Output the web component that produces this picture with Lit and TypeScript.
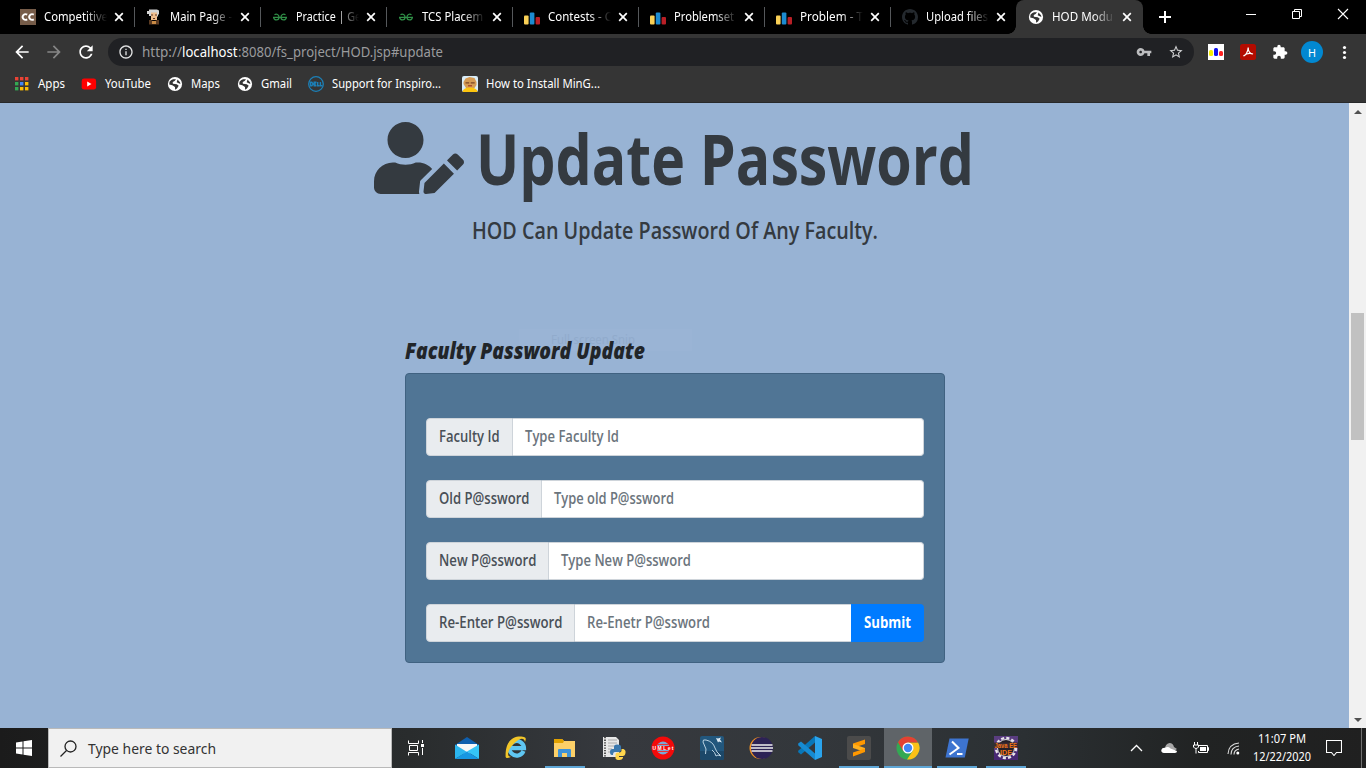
import { LitElement, html, svg, css, nothing, TemplateResult, SVGTemplateResult } from "lit";
import { customElement } from "lit/decorators.js";

// One line of text set to a fixed measure, capitals centred in its box.
const line = (text: string, width: number, size: number, cls = "ui", height = Math.round(size * 1.5)) => html`
  <svg class="line ${cls}" width=${width} height=${height}>
    <text x="0" y=${height / 2 + size * 0.355} font-size=${size} textLength=${width} lengthAdjust="spacingAndGlyphs" xml:space="preserve">${text}</text>
  </svg>`;

const icon = (body: SVGTemplateResult, w = 16, h = w, box = `0 0 ${w} ${h}`) =>
  html`<svg class="icon" width=${w} height=${h} viewBox=${box}>${body}</svg>`;
const material = (d: string, size: number, color: string) =>
  icon(svg`<path fill=${color} d=${d} />`, size, size, "0 0 24 24");

const globe = icon(svg`<circle cx="8" cy="8" r="7.1" fill="#fff"/>
  <path d="M2.5 5.8 4 4.2 6 3.3 9 3.2 7.6 5 5.7 6 5.9 7.7 9.8 8.3 11.7 9.7 10 12.5 8.1 13.8 8 11 5.3 9.3 2.2 8.5z" fill="#353535"/>
  <path d="M10.5 3.4 13 6.2 13.4 8 11.2 7 9.7 6.3z" fill="#353535"/>`);

const bars = icon(svg`<rect x="0" y="6.500" width="4.6" height="9" rx="1" fill="#f9d056"/>
  <rect x="5.8" y="3.500" width="4.6" height="12" rx="1" fill="#1c8bd0"/>
  <rect x="11.6" y="8" width="4.4" height="7.500" rx="1" fill="#b91f26"/>`);

const geeks = icon(svg`<g fill="none" stroke="#2f8d46" stroke-width="1.3">
  <path d="M1 8.4H15M2.500 5.700C4.500 4.400 7 5.500 7 8.300 7 11.600 2.200 12 1.600 8.400M13.500 5.700C11.500 4.400 9 5.500 9 8.300 9 11.600 13.800 12 14.400 8.400"/></g>`);

const codechef = icon(svg`<rect width="16" height="16" fill="#765c49"/>
  <path d="M7.2 5.6A3 2.8 0 1 0 7.2 10.4M13.8 5.6A3 2.8 0 1 0 13.8 10.4" fill="none" stroke="#fff" stroke-width="1.9"/>`);

const wizard = icon(svg`<path d="M3 .500h8l2 1v4h-1v2h-1V4H5v3H3V5H1V2h2z" fill="#d4d4d4"/><path d="M5 3.500h6V11H5z" fill="#efbd8c"/>
  <path d="M5 5.500h2v1H5zM9 5.500h2v1H9zM7 9h2v1H7z" fill="#5b3522"/><path d="M3 11h2l3 1.500 3-1.500h2v4.500H3z" fill="#5d3c22"/><path d="M6 12h4v3H6z" fill="#c98b45"/>`);

const github = icon(svg`<path fill="#24292e" d="M8 0C3.58 0 0 3.58 0 8c0 3.54 2.29 6.53 5.47 7.59.4.07.55-.17.55-.38 0-.19-.01-.82-.01-1.49-2.01.37-2.53-.49-2.69-.94-.09-.23-.48-.94-.82-1.13-.28-.15-.68-.52-.01-.53.63-.01 1.08.58 1.23.82.72 1.21 1.87.87 2.33.66.07-.52.28-.87.51-1.07-1.78-.2-3.64-.89-3.64-3.95 0-.87.31-1.59.82-2.15-.08-.2-.36-1.02.08-2.12 0 0 .67-.21 2.2.82.64-.18 1.32-.27 2-.27s1.36.09 2 .27c1.53-1.04 2.2-.82 2.2-.82.44 1.1.16 1.92.08 2.12.51.56.82 1.27.82 2.15 0 3.07-1.87 3.75-3.65 3.95.29.25.54.73.54 1.48 0 1.07-.01 1.93-.01 2.2 0 .21.15.46.55.38A8.01 8.01 0 0016 8c0-4.42-3.58-8-8-8z"/>`);

const cross = icon(svg`<path d="M1.2 1.2 8.8 8.8M8.8 1.2 1.2 8.8" stroke="#fff" stroke-width="1.7"/>`, 10);

const tabs: [TemplateResult, string, number][] = [
  [codechef, "Competitive", 64],
  [wizard, "Main Page -", 62],
  [geeks, "Practice | Ge", 65],
  [geeks, "TCS Placem", 61],
  [bars, "Contests - C", 64],
  [bars, "Problemset", 60],
  [bars, "Problem - T", 63],
  [github, "Upload files", 62],
  [globe, "HOD Modu", 61],
];

const apps = icon(svg`${["#ea4335", "#ea4335", "#ea4335", "#34a853", "#4285f4", "#fbbc04", "#34a853", "#fbbc04", "#fbbc04"].map(
  (c, i) => svg`<rect x=${1 + (i % 3) * 5} y=${1 + Math.floor(i / 3) * 5} width="3.4" height="3.4" fill=${c}/>`)}`);
const youtube = icon(svg`<rect x=".7" y="2.6" width="14.4" height="11" rx="2.4" fill="#f00"/><path d="M6.2 5.6v5l4.3-2.5z" fill="#fff"/>`);
const dell = icon(svg`<circle cx="8" cy="8" r="7.3" fill="none" stroke="#1c80b8" stroke-width="1.3"/>
  <path d="M2.6 6.2v3.6h1.2l1.3-1.8-1.3-1.8zM8.5 6.2H6.2v3.6h2.3M6.2 8h2M9.7 6v3.8h1.8M12.4 6v3.8h2" fill="none" stroke="#1c80b8" stroke-width="1.4"/>`);
const mascot = icon(svg`<rect width="16" height="16" rx="2" fill="#d9ecf8"/><path d="M1.500 8V6l2-3.500 4-1.500 5 1 2 4v3l-2 3H4z" fill="#d59b54"/>
  <path d="M3.5 6.2h3.7v1.3H3.500zM8.7 6.2h4v1.3h-4z" fill="#7a4526"/><path d="M6 9.2h4v1.2H6z" fill="#a23a25"/><path d="M.500 16q.500-4.500 7.500-4.500t7.500 4.500z" fill="#fcc40e"/>`);

const bookmarks: [TemplateResult, string, number, string][] = [
  [apps, "Apps", 27, ""],
  [youtube, "YouTube", 46, ""],
  [globe, "Maps", 29, "near"],
  [globe, "Gmail", 31, ""],
  [dell, "Support for Inspiro...", 109, "long"],
  [mascot, "How to Install MinG...", 114, ""],
];

// label, label width, label cell width, placeholder, placeholder width
const fields: [string, number, number, string, number][] = [
  ["Faculty Id", 60, 87, "Type Faculty Id", 94],
  ["Old P@ssword", 90, 116, "Type old P@ssword", 120],
  ["New P@ssword", 97, 123, "Type New P@ssword", 130],
  ["Re-Enter P@ssword", 123, 149, "Re-Enetr P@ssword", 123],
];

const mail = icon(svg`<path d="M0 9 12 1l12 8v5H0z" fill="#0f5fae"/><path d="M2 8h20v6l-10 5L2 14z" fill="#f7f7f7"/>
  <path d="M0 8.5 12 16 0 23z" fill="#2bb5ee"/><path d="M24 8.5V23L12 15.5z" fill="#35c5f5"/><path d="M0 23 12 15.5 24 23z" fill="#1797e2"/>`, 24);
const explorer = icon(svg`<path d="M1 3h8l2 2h11v16H1z" fill="#fdd068"/><path d="M1 3h8l2 2-1 2H1z" fill="#e1a100"/>
  <path d="M5 21v-7q0-1 1-1h11q1 0 1 1v7h-4v-4H9v4z" fill="#3f93d8"/>`, 24);
const ie = icon(svg`<path d="M19.5 15A7.3 7.3 0 1 1 20 12.2H6.5" fill="none" stroke="#5fc6f2" stroke-width="4.2"/>
  <path d="M21 1.4C15-1 1-0 1.6 20.8 2 23 5 22 7 20.7 1.5 21 4.5 12 11 6.4 16 2 20 1 21 6 22 3.4 22 2 21 1.4z" fill="#f2c629"/>`, 24);
const python = icon(svg`<path d="M1 1h13l3 3v17H1z" fill="#e8e8e8"/><path d="M3 1v20" stroke="#555" stroke-width="2" stroke-dasharray="1.3 1.3"/>
  <path d="M6 4h9M6 7h9M6 10h6M6 13h4M6 16h3" stroke="#aaa"/>
  <path d="M12 13V10.500q0-2 3-2 4 0 4 2V14q0 2-2 2h-4q-2 0-2 3H10q-2 0-2-3t2.500-3z" fill="#3b78ad"/>
  <path d="M19.500 13h2q2.500 1 2 4t-2.500 3h-4v1h4v1q-1 2-3.500 2-4 0-4-2v-3.500q0-2 2-2h2q2 0 2-2z" fill="#ffd64d"/>`, 25);
const umlet = icon(svg`<circle cx="12" cy="12" r="11.5" fill="#f30a0a"/><circle cx="12" cy="12" r="6.500" fill="#7da7d4"/>
  <path d="M6.500 8.500h11M6.500 15.500h11" stroke="#e33" stroke-width="1.2"/><path d="M1 10h22v4H1z" fill="#f30a0a"/>
  <text x="1.500" y="13.900" font-size="5" font-weight="700" fill="#fff" textLength="21" font-family="Liberation Sans, sans-serif">UMLet</text>`, 24);
const mysql = icon(svg`<rect width="24" height="24" rx="2" fill="#22577d"/><path d="M0 15h24v7q0 2-2 2H2q-2 0-2-2z" fill="#1c4869"/>
  <path d="M5.500 18 6 13 3 6Q2.500 3 6 4q7 1.500 9 8l2 4 4 4-3-1-2 1q-1-4-4-6" fill="none" stroke="#b9d2e2"/><path d="m16 2 2 .500 3-1-1 2 2 3-3-1-1 1z" fill="#dce9f2"/>`, 24);
const eclipse = icon(svg`<circle cx="11.500" cy="12" r="11" fill="#f59323"/><circle cx="13" cy="12" r="11" fill="#2c2255"/>
  <path d="M2.500 9h21M2 12h22M2.500 15h21" stroke="#eee" stroke-width="1.600"/>`, 24);
const vscode = icon(svg`<path d="M17 0 24 3v18l-7 3z" fill="#2aa4ed"/><path d="m17 0v6.500L3 18.500.200 16.300v-1.500z" fill="#0877b9"/><path d="M17 24v-6.500L3 5.500.200 7.600v1.700z" fill="#168bd2"/>`, 24);
const sublime = icon(svg`<rect width="24" height="24" rx="2" fill="#4b4b4b"/><path d="m6 7.500 12-4v4.500L6 12z" fill="#ff9800"/><path d="M6 8v4l12 4v-4z" fill="#ffb020"/><path d="m6 16.500 12-4V16L6 20.500z" fill="#ff9800"/>`, 24);
const chrome = icon(svg`<circle cx="12" cy="12" r="11.500" fill="#33a853"/>
  <path d="M12 6.500h10.100A11.500 11.500 0 0 1 11 23.500l6-9z" fill="#fbc116"/><path d="m2 6.200 5.200 9L12 6.500h10q-3-6-10-6T2 6.200z" fill="#e34133"/>
  <circle cx="12" cy="12" r="5.500" fill="#fff"/><circle cx="12" cy="12" r="4.200" fill="#4285f4"/>`, 24);
const powershell = icon(svg`<path d="M4.500 2.500h19.200L19.800 21.500H.500z" fill="#3d74d0"/><path d="m7 5.500 6.500 6.500L4.500 18.500M12 18h5.500" fill="none" stroke="#fff" stroke-width="2"/>`, 24);
const javaee = icon(svg`<rect width="24" height="24" fill="#5a3d80"/><path d="M0 15h24v9H0z" fill="#472873"/>
  <circle cx="12" cy="12" r="10" fill="none" stroke="#e7e4e9" stroke-width="2.400" stroke-dasharray="3.100 2.133"/><circle cx="12" cy="12" r="8.500" fill="#251f29" stroke="#ddd"/>
  <path d="M0 6.500h24v5.500H0z" fill="#3a2a33"/>
  <g font-family="Liberation Sans, sans-serif" font-weight="700" font-size="7" fill="#f07416"><text x="0.500" y="11.800" textLength="22.500" lengthAdjust="spacingAndGlyphs">Java EE</text><text x="6" y="18.500" textLength="12" lengthAdjust="spacingAndGlyphs">IDE</text></g>`, 24);

const tasks: [TemplateResult, string][] = [
  [mail, ""], [ie, ""], [explorer, "open"], [python, ""], [umlet, ""], [mysql, ""],
  [eclipse, ""], [vscode, ""], [sublime, "open"], [chrome, "open current"], [powershell, "open"], [javaee, "open"],
];

@customElement("app-root")
export class AppRoot extends LitElement {
  static styles = css`
    :host { display: flex; flex-direction: column; width: 1366px; height: 768px; overflow: hidden; background: #98b3d4; }
    svg { display: block; flex: none; }
    .line { overflow: visible; }
    .ui { font-family: "Noto Sans", "Open Sans", sans-serif; fill: #fff; }
    .url { fill: #9a9b9d; }
    .dark { fill: #333; }
    .acme { font-family: "Open Sans", "Noto Sans", sans-serif; font-weight: 600; fill: #343a40; }
    .display { font-weight: 700; }
    .label { fill: #495057; }
    .hint { fill: #6c757d; }
    .strong { fill: #fff; font-weight: 700; }
    .slant { fill: #212529; font-weight: 800; font-style: italic; }

    .strip { display: flex; height: 34px; padding-left: 8px; background: #000; flex: none; }
    .tab { display: flex; align-items: center; width: 126px; box-sizing: border-box; padding-left: 12px; height: 34px; flex: none; }
    .title { width: 63px; margin: 0 7px 0 8px; overflow: hidden; -webkit-mask-image: linear-gradient(90deg, #000 65%, transparent); mask-image: linear-gradient(90deg, #000 65%, transparent); }
    .rule { width: 1px; height: 20px; background: #55585b; margin: 0 -1px 0 auto; }
    .active { background: #353535; border-radius: 8px 8px 0 0; width: 127px; position: relative; }
    .active::before, .active::after { content: ""; position: absolute; bottom: 0; width: 8px; height: 8px; }
    .active::before { left: -8px; background: radial-gradient(circle at 0 0, #000 7.5px, #353535 8px); }
    .active::after { right: -8px; background: radial-gradient(circle at 100% 0, #000 7.5px, #353535 8px); }
    .plus { padding: 11px 0 0 16px; }
    .controls { display: flex; align-items: center; gap: 34px; height: 28px; margin: 0 17px 0 auto; }

    .toolbar { display: flex; align-items: center; height: 36px; background: #353535; padding: 0 6px; flex: none; }
    .slot { width: 32px; height: 32px; display: flex; align-items: center; justify-content: center; flex: none; }
    .pill { display: flex; align-items: center; width: 1086px; height: 28px; border-radius: 14px; background: #202124; margin: 0 6px 0 6px; padding: 0 2px; box-sizing: border-box; flex: none; }
    .address { display: flex; flex: 1; }
    .avatar { width: 22px; height: 22px; border-radius: 50%; background: #0288d1; display: flex; align-items: center; justify-content: center; }
    .marks { display: flex; align-items: center; gap: 16px; height: 33px; box-sizing: border-box; padding: 0 0 4px 14px; background: #353535; border-bottom: 1px solid #28292a; flex: none; }
    .mark { display: flex; align-items: center; gap: 8px; }
    .near { margin-right: 1px; }
    .long { margin-right: 5px; }

    .view { display: flex; flex: 1; min-height: 0; }
    .page { flex: 1; display: flex; flex-direction: column; align-items: center; padding-top: 19px; position: relative; isolation: isolate; }
    .hero { display: flex; align-items: center; gap: 12px; height: 72px; padding-right: 2px; }
    .hero .line { margin-top: 4px; }
    .sub { margin-top: 20px; }
    .panel { width: 540px; margin-top: 88px; }
    .panel h2 { margin: 0 0 7px; height: 30px; }
    .card { height: 290px; box-sizing: border-box; border: 1px solid #406281; border-radius: 4px; background: #507595; padding: 44px 20px 0; display: flex; flex-direction: column; gap: 24px; }
    .row { display: flex; height: 38px; flex: none; align-items: stretch; }
    .cell { display: flex; align-items: center; padding: 0 0 1px 12px; box-sizing: border-box; background: #e9ecef; border: 1px solid #ced4da; border-radius: 4px 0 0 4px; flex: none; }
    .entry { display: flex; align-items: center; flex: 1; padding: 0 0 1px 12px; background: #fff; border: 1px solid #ced4da; border-left: 0; border-radius: 0 4px 4px 0; }
    .joined { border-right: 0; border-radius: 0; }
    .submit { width: 73px; border: 0; padding: 0 0 1px; background: #007bff; border-radius: 0 4px 4px 0; display: flex; align-items: center; justify-content: center; }
    .ghost { position: absolute; z-index: -1; left: 519px; top: 226px; width: 173px; height: 22px; background: #9ab4d5; display: flex; align-items: center; padding-left: 32px; box-sizing: border-box; }
    .faint { fill: #91abcc; }

    .scroll { width: 17px; background: #f1f1f1; display: flex; flex-direction: column; align-items: center; flex: none; }
    .arrow { height: 17px; display: flex; align-items: center; }
    .thumb { width: 13px; height: 127px; margin: 193px 0 auto; background: #c1c1c1; }

    .taskbar { display: flex; height: 40px; background: linear-gradient(90deg, #1b1b1b, #292c2d 30%, #36393e 45%, #33373b 60%, #2b3033 75%, #212323 88%, #202020); flex: none; }
    .start { width: 48px; display: flex; align-items: center; justify-content: center; }
    .search { width: 344px; box-sizing: border-box; border: 1px solid #b9b9b9; background: #f1f1f1; display: flex; align-items: center; gap: 11px; padding-left: 11px; }
    .task { width: 48px; margin-right: 1px; display: flex; align-items: center; justify-content: center; box-sizing: border-box; flex: none; }
    .view-switch { margin-right: 3px; }
    .open { background: linear-gradient(#5ea6d6, #5ea6d6) 50% 100% / 40px 2px no-repeat; }
    .current { background: linear-gradient(#5ea6d6, #5ea6d6) 50% 100% / 48px 2px no-repeat, #5f6468; }
    .tray { margin-left: auto; display: flex; align-items: center; }
    .tray > .slot { width: 32.5px; }
    .clock { width: 64px; display: flex; flex-direction: column; align-items: center; }
    .notice { width: 40px; display: flex; justify-content: center; }
    .edge { width: 1px; height: 40px; background: #707070; margin: 0 4px 0 7px; }
  `;

  render() {
    return html`
      <header class="strip">
        ${tabs.map(([ic, name, w], i) => html`
          <div class="tab ${i === 8 ? "active" : ""}">
            ${ic}<div class="title">${line(name, w, 12)}</div>${cross}
            ${i < 7 ? html`<span class="rule"></span>` : nothing}
          </div>`)}
        <div class="plus">${icon(svg`<path d="M6 0v12M0 6h12" stroke="#fff" stroke-width="2"/>`, 12)}</div>
        <div class="controls">
          ${icon(svg`<path d="M1 6.500h10" stroke="#fff"/>`, 12)}
          ${icon(svg`<path d="M1.500 3.500h7v7h-7zM3.500 3.500v-2h7v7h-2" fill="none" stroke="#fff"/>`, 12)}
          ${icon(svg`<path d="m1 1 10 10M11 1 1 11" stroke="#fff" stroke-width="1.100"/>`, 12)}
        </div>
      </header>

      <nav class="toolbar">
        <div class="slot">${material("M20 11H7.83l5.59-5.59L12 4l-8 8 8 8 1.41-1.41L7.83 13H20v-2z", 20, "#fff")}</div>
        <div class="slot">${material("M12 4l-1.41 1.41L16.17 11H4v2h12.17l-5.58 5.59L12 20l8-8z", 20, "#868686")}</div>
        <div class="slot">${material("M17.65 6.35C16.2 4.9 14.21 4 12 4c-4.42 0-7.99 3.58-7.99 8s3.57 8 7.99 8c3.73 0 6.84-2.55 7.73-6h-2.08c-.82 2.33-3.04 4-5.65 4-3.31 0-6-2.69-6-6s2.690-6 6-6c1.66 0 3.14.69 4.22 1.78L13 11h7V4l-2.35 2.35z", 20, "#fff")}</div>
        <div class="pill">
          <div class="slot">${material("M11 7h2v2h-2zm0 4h2v6h-2zm1-9C6.48 2 2 6.48 2 12s4.48 10 10 10 10-4.48 10-10S17.52 2 12 2zm0 18c-4.41 0-8-3.590-8-8s3.590-8 8-8 8 3.590 8 8-3.590 8-8 8z", 16, "#e2e3e4")}</div>
          <div class="address">${line("http://", 40, 14, "ui url")}${line("localhost", 55.5, 14)}${line(":8080/fs_project/HOD.jsp#update", 205, 14, "ui url")}</div>
          <div class="slot">${material("M12.65 10C11.83 7.67 9.61 6 7 6c-3.31 0-6 2.69-6 6s2.69 6 6 6c2.61 0 4.83-1.67 5.65-4H17v4h4v-4h2v-4H12.65zM7 14c-1.1 0-2-.9-2-2s.9-2 2-2 2 .9 2 2-.9 2-2 2z", 16, "#bcbdbf")}</div>
          <div class="slot">${material("M22 9.24l-7.190-.62L12 2 9.19 8.63 2 9.24l5.46 4.73L5.82 21 12 17.27 18.18 21l-1.630-7.03L22 9.240zM12 15.4l-3.76 2.27 1-4.28-3.32-2.88 4.38-.38L12 6.1l1.71 4.04 4.38.38-3.32 2.88 1 4.28L12 15.4z", 16, "#d0d1d2")}</div>
        </div>
        <div class="slot">${icon(svg`<path fill="#fff" d="M0 0h16v16H0z"/><rect x="1" y="6" width="4" height="6" rx="1.500" fill="#f7ef00"/><rect x="6" y="4" width="4" height="8" rx="1.500" fill="#1010ee"/><rect x="11" y="7" width="4" height="5" rx="1.500" fill="#f22"/>`)}</div>
        <div class="slot">${icon(svg`<rect width="16" height="16" rx="2.500" fill="#b30b00"/><path d="M3.500 12c2-.5 4.500-4 4.700-8.500C8 7 10 10 13 10 10 9 6 9.800 3.500 12z" fill="none" stroke="#fff" stroke-width="1.200"/>`)}</div>
        <div class="slot">${material("M20.5 11H19V7c0-1.1-.9-2-2-2h-4V3.5C13 2.12 11.88 1 10.5 1S8 2.12 8 3.5V5H4c-1.1 0-1.99.9-1.99 2v3.8H3.5c1.49 0 2.7 1.21 2.7 2.7s-1.21 2.7-2.7 2.7H2V20c0 1.1.9 2 2 2h3.8v-1.5c0-1.49 1.21-2.7 2.7-2.7 1.49 0 2.7 1.21 2.7 2.7V22H17c1.1 0 2-.9 2-2v-4h1.5c1.38 0 2.5-1.12 2.5-2.5S21.88 11 20.5 11z", 16, "#fff")}</div>
        <div class="slot"><div class="avatar">${line("H", 8, 11.5)}</div></div>
        <div class="slot">${icon(svg`<g fill="#fff"><circle cx="8.500" cy="3.500" r="1.600"/><circle cx="8.500" cy="8.500" r="1.600"/><circle cx="8.500" cy="13.500" r="1.600"/></g>`)}</div>
      </nav>

      <div class="marks">
        ${bookmarks.map(([ic, name, w, cls]) => html`<div class="mark ${cls}">${ic}${line(name, w, 12)}</div>`)}
      </div>

      <main class="view">
        <section class="page">
          <div class="ghost">${line("Full-screen Snip", 84, 12, "ui faint")}</div>
          <div class="hero">
            ${icon(svg`<path fill="#343a40" d="M224 256c70.7 0 128-57.3 128-128S294.7 0 224 0 96 57.3 96 128s57.3 128 128 128zm89.6 32h-16.7c-22.2 10.2-46.9 16-72.9 16s-50.6-5.8-72.9-16h-16.7C60.2 288 0 348.2 0 422.4V464c0 26.5 21.5 48 48 48h274.9c-2.4-6.8-3.4-14-2.6-21.3l6.8-60.9 1.2-11.1 7.9-7.9 77.3-77.3c-24.5-27.7-60-45.500-99.9-45.500zm45.3 145.3l-6.8 61c-1.1 10.2 7.5 18.8 17.6 17.6l60.9-6.8 137.9-137.9-71.7-71.7-137.9 137.8zM633 268.9L595.1 231c-9.3-9.3-24.5-9.3-33.8 0l-37.8 37.8-4.1 4.1 71.8 71.7 41.8-41.8c9.3-9.4 9.3-24.5 0-33.9z"/>`, 90, 72, "0 0 640 512")}
            ${line("Update Password", 498, 69, "acme display", 90)}
          </div>
          <div class="sub">${line("HOD Can Update Password Of Any Faculty.", 406, 23.5, "acme", 34)}</div>
          <div class="panel">
            <h2>${line("Faculty Password Update", 240, 23.5, "acme slant", 30)}</h2>
            <form class="card">
              ${fields.map(([label, lw, cw, hint, hw], i) => html`
                <div class="row">
                  <label class="cell" style="width:${cw}px">${line(label, lw + 0.5, 15.5, "acme label")}</label>
                  <div class="entry ${i === 3 ? "joined" : ""}">${line(hint, hw, 15.5, "acme hint")}</div>
                  ${i === 3 ? html`<button class="submit" type="button">${line("Submit", 47, 15.5, "acme strong")}</button>` : nothing}
                </div>`)}
            </form>
          </div>
        </section>
        <aside class="scroll">
          <div class="arrow">${icon(svg`<path d="m0 4 4-4 4 4z" fill="#505050"/>`, 8, 4)}</div>
          <div class="thumb"></div>
          <div class="arrow">${icon(svg`<path d="m0 0 4 4 4-4z" fill="#505050"/>`, 8, 4)}</div>
        </aside>
      </main>

      <footer class="taskbar">
        <div class="start">${icon(svg`<path fill="#fff" d="M0 2.400 6.500 1.500v6H0zM7.500 1.300 16 0v7.500H7.500zM0 8.500h6.500v6L0 13.600zM7.500 8.500H16V16l-8.500-1.300z"/>`)}</div>
        <div class="search">
          ${icon(svg`<circle cx="10.500" cy="6.500" r="5.500" fill="none" stroke="#222" stroke-width="1.300"/><path d="m6.500 10.500L.500 16.500" stroke="#222" stroke-width="1.300"/>`, 17)}
          ${line("Type here to search", 128, 15, "ui dark")}
        </div>
        <div class="task view-switch">${icon(svg`<g fill="none" stroke="#fff"><path d="M.500.500V3.500H10.500V.500M.500 15.500V12.500H10.500V15.500M1.500 5.500h8v5h-8zM14.500 0v3M14.500 8v7"/></g><path d="M13 4h3v3h-3z" fill="#fff"/>`, 17)}</div>
        ${tasks.map(([ic, cls]) => html`<div class="task ${cls}">${ic}</div>`)}
        <div class="tray">
          <div class="slot">${icon(svg`<path d="m1 8 5.500-5.500L12 8" fill="none" stroke="#fff" stroke-width="1.300"/>`, 13, 10)}</div>
          <div class="slot">${icon(svg`<path d="M4 7Q4 2 8.500 1 12 1 13 5l3 2-6 4z" fill="#a8a8a8"/><path d="M3 11Q0 10.500.300 8 1 5.500 4 5.800 7 4 9.500 6.500L16 9q0 2-2 2z" fill="#fff"/>`, 16, 12)}</div>
          <div class="slot">${icon(svg`<path d="M5.500 3.500h9v7h-9V9M14.500 5.500h1v3h-1M1.500 0v3M4.500 0v3M.500 3h5v2q-1 1.500-2.500 1.500T.500 5zM3 6.500v5" fill="none" stroke="#fff"/><path d="M7 5h6v4H7z" fill="#fff"/>`, 16, 12)}</div>
          <div class="slot">${icon(svg`<g fill="none" stroke="#ddd" stroke-width="1.100"><path d="M1 12Q1.500 2 12 1M4 12.500Q4 5 12 4M7 12.500Q7 8 12 7"/></g><circle cx="10.800" cy="11" r="1.500" fill="#fff"/>`, 13)}</div>
          <div class="clock">${line("11:07 PM", 48, 12)}${line("12/22/2020", 58, 12)}</div>
          <div class="notice">${icon(svg`<path d="M.500.500h15v12h-5L8 15.500 5.500 12.500h-5z" fill="none" stroke="#fff" stroke-width="1.100"/>`, 16)}</div>
          <div class="edge"></div>
        </div>
      </footer>`;
  }
}
